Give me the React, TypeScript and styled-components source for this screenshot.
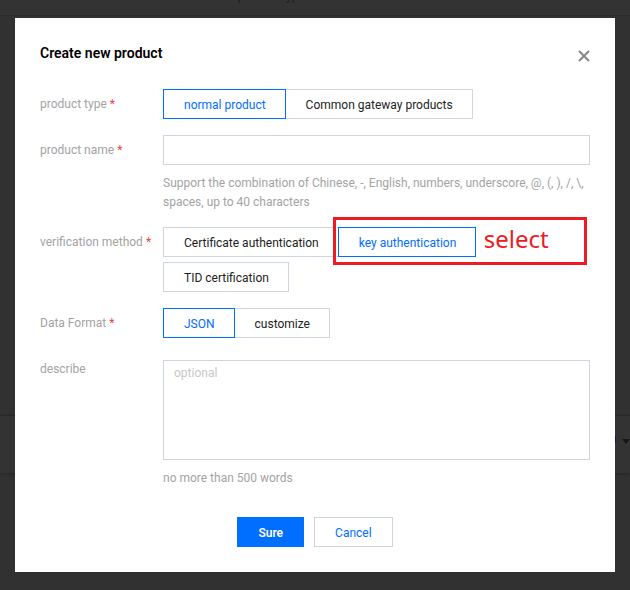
import React, { useState } from 'react';
import styled, { createGlobalStyle } from 'styled-components';

const GlobalStyle = createGlobalStyle`
  *, *::before, *::after { box-sizing: border-box; }
  body {
    margin: 0;
    background: #313131;
    color: #222;
    font: 12px/18px Roboto, "Liberation Sans", sans-serif;
  }
  button, input, textarea { font: inherit; }
`;

const Page = styled.div`
  display: grid;
  min-height: 100vh;
`;

const Backdrop = styled.div`
  grid-area: 1 / 1;
  overflow: hidden;
`;

const BackdropHead = styled.div`
  height: 16px;
  padding-left: 238px;
  overflow: hidden;
  background: #333;
  border-bottom: 1px solid #2b2b2b;
  color: #1c1c1c;
`;

const BackdropLabel = styled.div`
  margin-top: -13px;
`;

const BackdropBar = styled.div`
  display: flex;
  align-items: center;
  justify-content: flex-end;
  height: 58px;
  margin-top: 399px;
  padding-bottom: 8px;
  background: #333;
  border-top: 1px solid #282828;
  box-shadow: 0 1px 3px #262626;
`;

const Dialog = styled.form`
  grid-area: 1 / 1;
  z-index: 1;
  align-self: start;
  margin: 18px 15px;
  padding: 25px;
  background: #fff;
`;

const Header = styled.header`
  display: flex;
  justify-content: space-between;
  align-items: flex-start;
  margin-bottom: 26px;
`;

const Title = styled.h1`
  margin: 0;
  font-size: 14px;
  line-height: 20px;
  font-weight: 600;
  color: #000;
`;

const CloseButton = styled.button`
  display: flex;
  margin: 7px 0 0;
  padding: 0;
  border: 0;
  background: none;
  cursor: pointer;
`;

const Rows = styled.div`
  display: flex;
  flex-direction: column;
  gap: 16px;
`;

const Row = styled.div`
  display: grid;
  grid-template-columns: 123px minmax(0, 1fr);
  align-items: start;
`;

const Label = styled.label`
  padding-top: 6px;
  color: #a3a3a3;
`;

const Star = styled.span`
  margin-left: 3px;
  color: #e54545;
`;

const Control = styled.div<{ $lowered?: boolean }>`
  padding-top: ${(p) => (p.$lowered ? '6px' : '0')};
`;

const inputBorder = '1px solid #cfd5de';

const TextInput = styled.input`
  display: block;
  width: 100%;
  height: 30px;
  padding: 0 10px;
  border: ${inputBorder};
  border-radius: 0;
  outline: none;
`;

const TextArea = styled.textarea`
  display: block;
  width: 100%;
  height: 100px;
  padding: 3px 10px;
  border: ${inputBorder};
  border-radius: 0;
  outline: none;
  resize: none;
  &::placeholder { color: #c8c8c8; }
`;

const Help = styled.p`
  margin: 9px 0 -1px;
  line-height: 19px;
  color: #a3a3a3;
`;

const Segments = styled.div`
  display: flex;
  flex-wrap: wrap;
  row-gap: 5px;
  padding-left: 1px;
`;

const Segment = styled.label`
  position: relative;
  margin-left: -1px;
  height: 30px;
  padding: 0 19px 0 20px;
  border: ${inputBorder};
  line-height: 30px;
  white-space: nowrap;
  cursor: pointer;
  &:has(input:checked) {
    z-index: 1;
    border-color: #006eff;
    color: #006eff;
  }
`;

const HiddenRadio = styled.input`
  position: absolute;
  inset: 0;
  margin: 0;
  opacity: 0;
`;

const Callout = styled.span`
  position: absolute;
  top: -11px;
  left: -6px;
  width: 254px;
  height: 48px;
  padding-left: 148px;
  border: 3px solid #ed1c24;
  color: #ed1c24;
  font: 24px/38px "Noto Sans", sans-serif;
  pointer-events: none;
`;

const Footer = styled.footer`
  display: flex;
  justify-content: center;
  gap: 10px;
  margin-top: 30px;
`;

const Button = styled.button<{ $primary?: boolean }>`
  height: 30px;
  padding: 1px 20px 0;
  border: 1px solid ${(p) => (p.$primary ? '#006eff' : '#cfd5de')};
  background: ${(p) => (p.$primary ? '#006eff' : '#fff')};
  color: ${(p) => (p.$primary ? '#fff' : '#006eff')};
  font-weight: ${(p) => (p.$primary ? 600 : 400)};
  cursor: pointer;
`;

type ChoiceProps = {
  name: string;
  label: string;
  options: string[];
  initial: string;
  highlight?: string;
};

function Choice({ name, label, options, initial, highlight }: ChoiceProps) {
  const [value, setValue] = useState(initial);
  return (
    <Row role="radiogroup" aria-labelledby={`${name}-label`}>
      <Label as="span" id={`${name}-label`}>
        {label}
        <Star>*</Star>
      </Label>
      <Segments>
        {options.map((option) => (
          <Segment key={option}>
            <HiddenRadio
              type="radio"
              name={name}
              aria-label={option}
              checked={value === option}
              onChange={() => setValue(option)}
            />
            {option}
            {option === highlight && <Callout>select</Callout>}
          </Segment>
        ))}
      </Segments>
    </Row>
  );
}

export default function App() {
  return (
    <>
      <GlobalStyle />
      <Page>
        <Backdrop aria-hidden="true">
          <BackdropHead>
            <BackdropLabel>product type</BackdropLabel>
          </BackdropHead>
          <BackdropBar>
            <svg width="16" height="10" viewBox="0 0 16 10">
              <rect width="2" height="7" fill="#0b1f45" />
              <path d="M8 3h8l-4 5z" fill="#171717" />
            </svg>
          </BackdropBar>
        </Backdrop>
        <Dialog role="dialog" aria-labelledby="title" onSubmit={(e) => e.preventDefault()}>
          <Header>
            <Title id="title">Create new product</Title>
            <CloseButton type="button" aria-label="Close">
              <svg width="12" height="12" viewBox="0 0 12 12">
                <path d="M1 1l10 10M11 1L1 11" stroke="#888" strokeWidth="2" />
              </svg>
            </CloseButton>
          </Header>
          <Rows>
            <Choice
              name="type"
              label="product type"
              options={['normal product', 'Common gateway products']}
              initial="normal product"
            />
            <Row>
              <Label htmlFor="name">
                product name
                <Star>*</Star>
              </Label>
              <Control>
                <TextInput id="name" type="text" />
                <Help>
                  Support the combination of Chinese, -, English, numbers, underscore, @, (, ), /, \,
                  spaces, up to 40 characters
                </Help>
              </Control>
            </Row>
            <Choice
              name="auth"
              label="verification method"
              options={['Certificate authentication', 'key authentication', 'TID certification']}
              initial="key authentication"
              highlight="key authentication"
            />
            <Choice name="format" label="Data Format" options={['JSON', 'customize']} initial="JSON" />
            <Row>
              <Label htmlFor="describe">describe</Label>
              <Control $lowered>
                <TextArea id="describe" placeholder="optional" />
                <Help>no more than 500 words</Help>
              </Control>
            </Row>
          </Rows>
          <Footer>
            <Button type="submit" $primary>Sure</Button>
            <Button type="button">Cancel</Button>
          </Footer>
        </Dialog>
      </Page>
    </>
  );
}
